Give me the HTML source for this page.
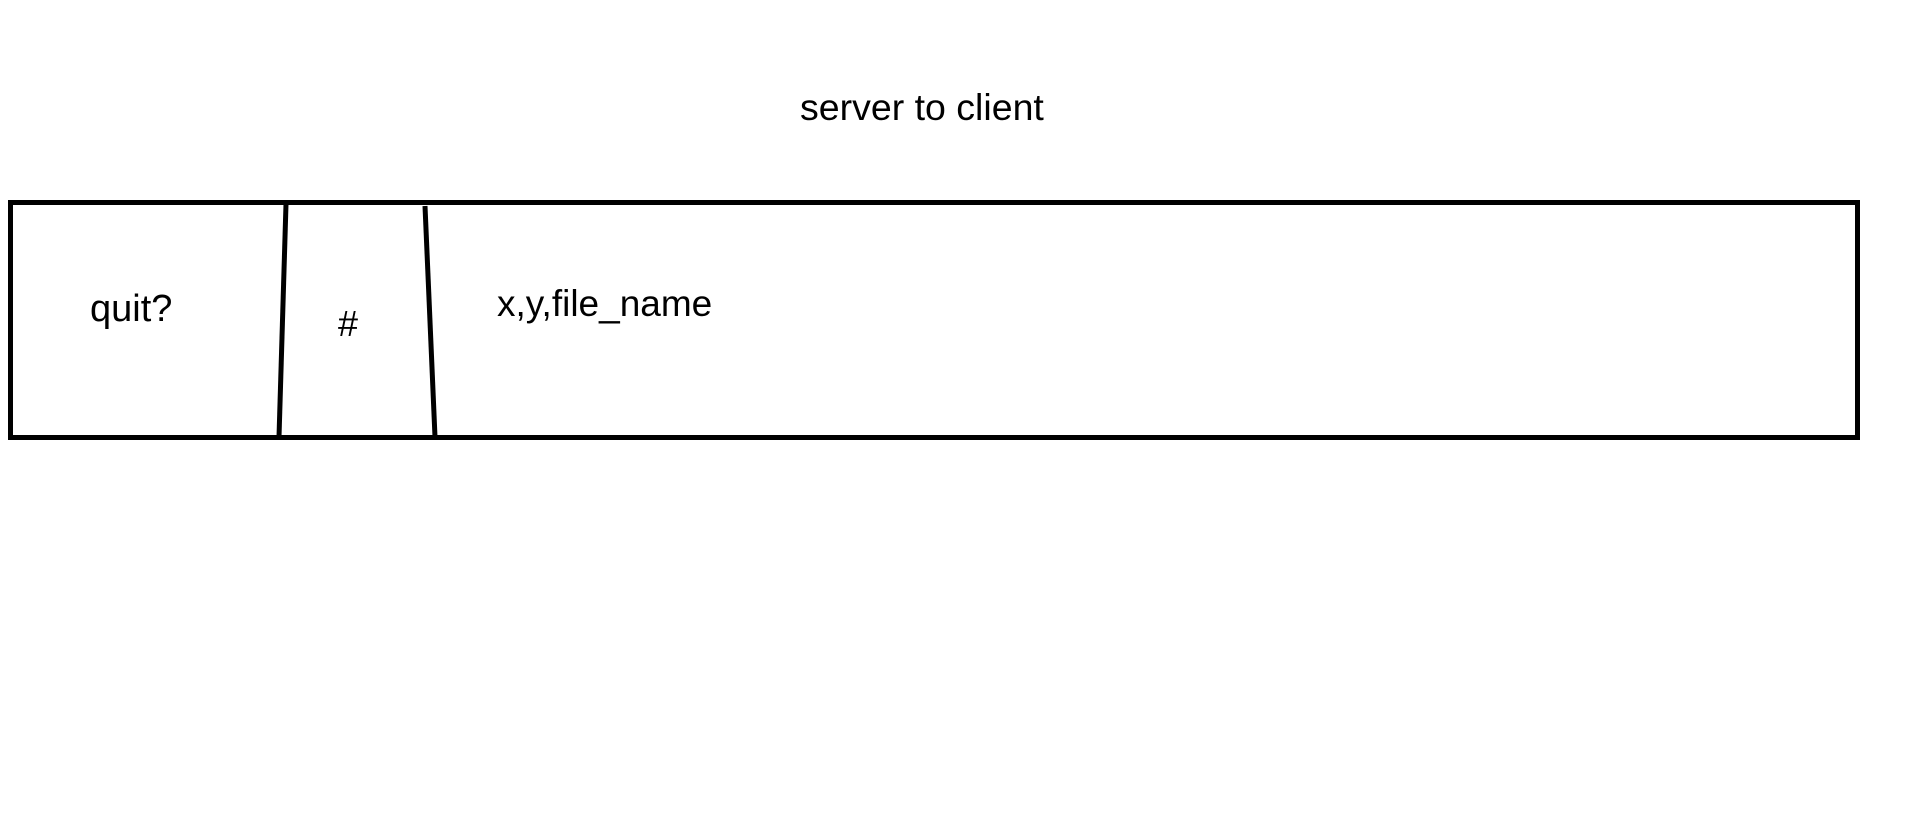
<!DOCTYPE html>
<html><head><style>
body{margin:0;width:1914px;height:823px;background:#fff;position:relative;overflow:hidden;font-family:"Liberation Sans",sans-serif;color:#000}
.t{position:absolute;line-height:1;white-space:nowrap}
</style></head><body>
<svg width="1914" height="823" style="position:absolute;left:0;top:0">
<rect x="10.5" y="202.5" width="1847" height="235" fill="none" stroke="#000" stroke-width="5"/>
<line x1="286" y1="204" x2="279" y2="437" stroke="#000" stroke-width="5"/>
<line x1="425" y1="206" x2="435" y2="437" stroke="#000" stroke-width="5"/>
</svg>
<div class="t" style="left:800px;top:89px;font-size:37.5px">server to client</div>
<div class="t" style="left:90px;top:290px;font-size:38px">quit?</div>
<div class="t" style="left:338px;top:306px;font-size:36px">#</div>
<div class="t" style="left:497px;top:285px;font-size:37px">x,y,file_name</div>
</body></html>
